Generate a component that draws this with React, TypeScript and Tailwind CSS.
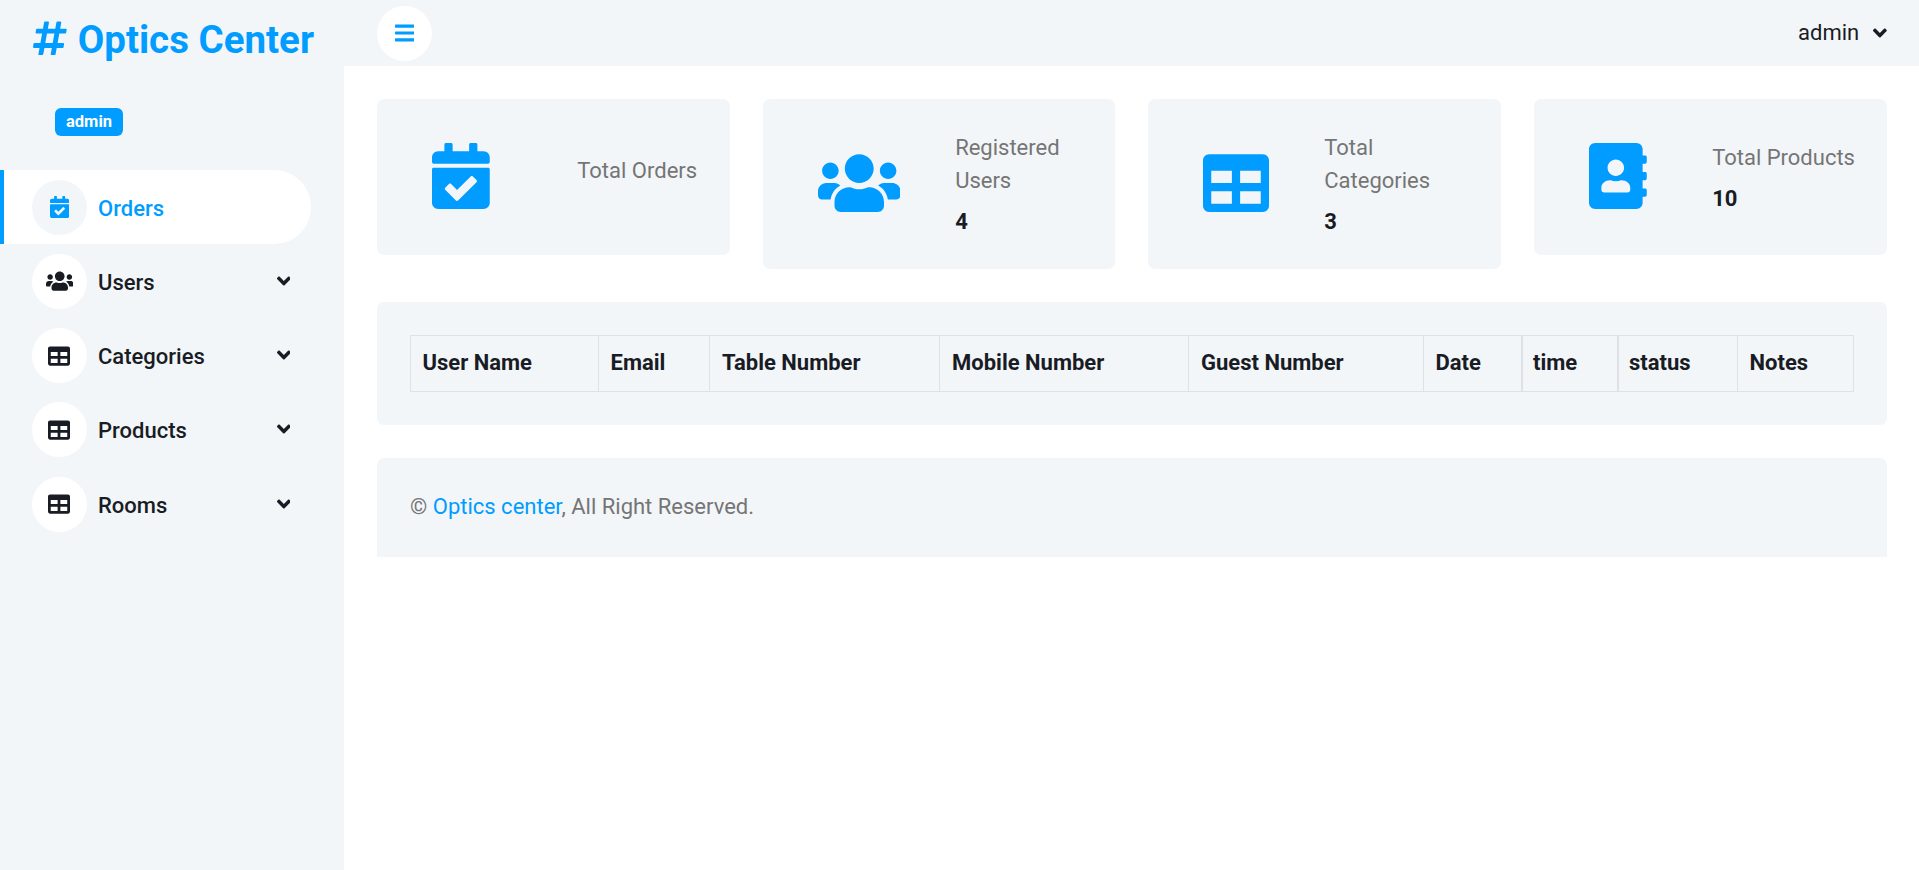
import type { ReactNode } from "react";
import {
  FaAddressBook,
  FaAngleDown,
  FaBars,
  FaCalendarCheck,
  FaHashtag,
  FaTable,
  FaUsers,
} from "react-icons/fa";

const navItems: { label: string; icon: ReactNode }[] = [
  { label: "Users", icon: <FaUsers className="h-[22px] w-[27.5px]" /> },
  { label: "Categories", icon: <FaTable className="size-[22px]" /> },
  { label: "Products", icon: <FaTable className="size-[22px]" /> },
  { label: "Rooms", icon: <FaTable className="size-[22px]" /> },
];

const columns = [
  { label: "User Name", cell: "w-[188px] border-r pl-[11.5px]" },
  { label: "Email", cell: "w-[111px] border-r pl-[11.5px]" },
  { label: "Table Number", cell: "w-[230px] border-r pl-[12px]" },
  { label: "Mobile Number", cell: "w-[249px] border-r pl-[12px]" },
  { label: "Guest Number", cell: "w-[235px] border-r pl-[12px]" },
  { label: "Date", cell: "w-[98px] border-r-2 pl-[11.5px]" },
  { label: "time", cell: "w-[96px] border-r-2 pl-[10.5px]" },
  { label: "status", cell: "w-[120px] border-r pl-[10.5px]" },
  { label: "Notes", cell: "w-[116px] border-r pl-[11.5px]" },
];

function StatCard({
  icon,
  label,
  value,
  indent,
}: {
  icon: ReactNode;
  label: ReactNode;
  value?: string;
  indent: string;
}) {
  return (
    <div className="flex items-center rounded-[7px] bg-[#f3f6f9] pt-[32px] pb-[34px] pl-[55px]">
      <div className="flex h-[90px] shrink-0 items-center text-[#009cff]">{icon}</div>
      <div className={indent}>
        <p className="mb-[12px] whitespace-nowrap leading-[33px]">{label}</p>
        {value && <h6 className="font-bold leading-[26px] text-[#191c24]">{value}</h6>}
      </div>
    </div>
  );
}

export default function App() {
  return (
    <div className="flex h-[870px] w-full overflow-hidden bg-white font-[Roboto,sans-serif] text-[22px] leading-[33px] text-[#757575]">
      <aside className="w-[343.75px] shrink-0 bg-[#f3f6f9]">
        <h3 className="flex h-[78px] items-start pl-[33px] pt-[17px] text-[38.5px] font-bold leading-[46px] text-[#009cff]">
          <FaHashtag className="mt-[2px] h-[38.5px] w-[33.7px]" />
          <span className="ml-[11px] whitespace-nowrap">Optics Center</span>
        </h3>
        <div className="flex h-[92px] pl-[55px] pt-[30px]">
          <span className="h-[28px] rounded-[6px] bg-[#009cff] px-[11px] text-[16.5px] font-bold leading-[27px] text-white">
            admin
          </span>
        </div>
        <nav className="w-[311px] font-medium text-[#191c24]">
          <a className="flex h-[74.3px] items-center rounded-r-full border-l-4 border-[#009cff] bg-white pl-[28px] text-[#009cff]">
            <span className="flex size-[55px] items-center justify-center rounded-full bg-[#f3f6f9]">
              <FaCalendarCheck className="h-[22px] w-[19.25px]" />
            </span>
            <span className="ml-[11px] pt-[2px]">Orders</span>
          </a>
          {navItems.map((item) => (
            <a key={item.label} className="flex h-[74.25px] items-center pl-[32px] pr-[20.75px]">
              <span className="flex size-[55px] items-center justify-center rounded-full bg-white pr-[0.5px]">
                {item.icon}
              </span>
              <span className="ml-[11px] flex-1 pt-[2px]">{item.label}</span>
              <FaAngleDown className="mb-[1px] h-[22px] w-[13.75px]" />
            </a>
          ))}
        </nav>
      </aside>

      <div className="min-w-0 flex-1">
        <header className="flex h-[66px] items-center justify-between bg-[#f3f6f9] pl-[33px] pr-[32px]">
          <button className="flex size-[55px] items-center justify-center rounded-full bg-white text-[#009cff]">
            <FaBars className="h-[22px] w-[19.25px]" />
          </button>
          <div className="flex items-center pb-[2px] text-[#191c24]">
            <span>admin</span>
            <FaAngleDown className="ml-[14px] mt-[1px] h-[22px] w-[13.75px]" />
          </div>
        </header>

        <main className="pl-[33.25px] pr-[32.5px] pt-[33px]">
          <section className="grid h-[170px] grid-cols-4 items-start gap-[33px]">
            <StatCard
              icon={<FaCalendarCheck className="h-[66px] w-[57.75px]" />}
              label="Total Orders"
              indent="ml-[87.5px]"
            />
            <StatCard
              icon={<FaUsers className="h-[66px] w-[82.5px]" />}
              label={<>Registered<br />Users</>}
              value="4"
              indent="ml-[55px]"
            />
            <StatCard
              icon={<FaTable className="size-[66px]" />}
              label={<>Total<br />Categories</>}
              value="3"
              indent="ml-[55px]"
            />
            <StatCard
              icon={<FaAddressBook className="h-[66px] w-[57.75px]" />}
              label="Total Products"
              value="10"
              indent="ml-[65.5px]"
            />
          </section>

          <section className="mt-[33px] h-[123px] rounded-[7px] bg-[#f3f6f9] py-[33px] pl-[33px] pr-[34px]">
            <table className="w-full table-fixed border-collapse text-left text-[#191c24]">
              <thead>
                <tr className="h-[56px]">
                  {columns.map((column) => (
                    <th
                      key={column.label}
                      className={`${column.cell} whitespace-nowrap border-y border-l border-[#dee2e6] pb-[2px] font-bold`}
                    >
                      {column.label}
                    </th>
                  ))}
                </tr>
              </thead>
            </table>
          </section>

          <footer className="mt-[33px] h-[99px] rounded-t-[7px] bg-[#f3f6f9] p-[33px] pt-[32px]">
            &copy; <a className="text-[#009cff]">Optics center</a>, All Right Reserved.
          </footer>
        </main>
      </div>
    </div>
  );
}
